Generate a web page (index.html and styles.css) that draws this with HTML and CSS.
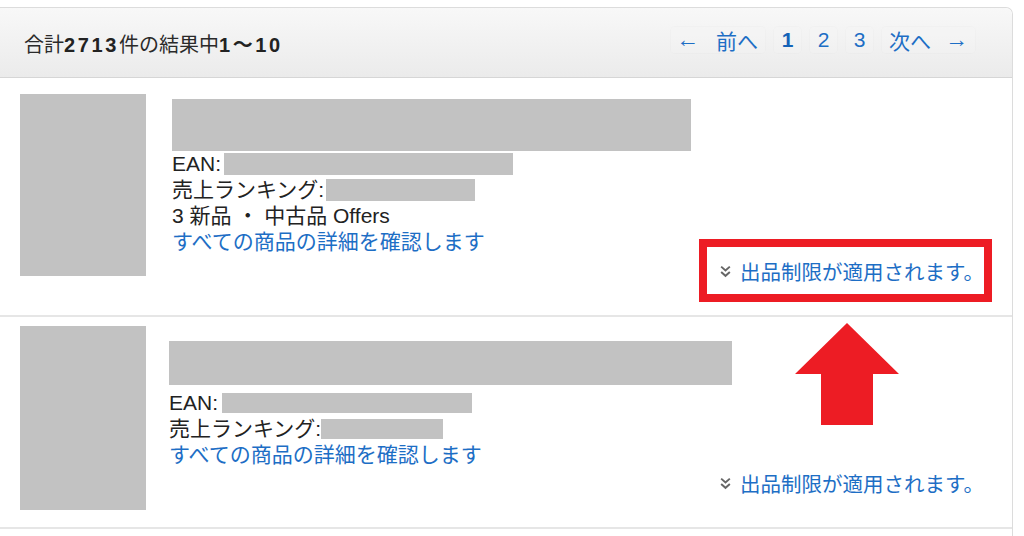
FILE: index.html
```html
<!DOCTYPE html>
<html lang="ja">
<head>
<meta charset="utf-8">
<title>検索結果</title>
<link rel="stylesheet" href="styles.css">
</head>
<body>
<div class="card">
  <div class="card-head">
    <div class="summary">合計<b>2713</b>件の結果中<b>1～10</b></div>
    <nav class="pager">
      <a class="pg pg-prev"><span class="arr">←</span><span>前へ</span></a>
      <a class="pg pg-num pg-cur">1</a>
      <a class="pg pg-num">2</a>
      <a class="pg pg-num">3</a>
      <a class="pg pg-next"><span>次へ</span><span class="arr">→</span></a>
    </nav>
  </div>

  <div class="row row-a">
    <div class="thumb"></div>
    <div class="info">
      <div class="title-block"></div>
      <div class="line">EAN:<span class="redact redact-ean"></span></div>
      <div class="line">売上ランキング:<span class="redact redact-rank"></span></div>
      <div class="line">3 新品 ・ 中古品 Offers</div>
      <a class="line link">すべての商品の詳細を確認します</a>
    </div>
    <div class="restrict">
      <svg class="chev" viewBox="0 0 12 12" width="13" height="13"><polyline points="2,1.5 6,5 10,1.5" fill="none" stroke="#666" stroke-width="1.8"/><polyline points="2,6.5 6,10 10,6.5" fill="none" stroke="#666" stroke-width="1.8"/></svg>
      <span>出品制限が適用されます。</span>
      <span class="mark-box"></span>
    </div>
  </div>

  <div class="row row-b">
    <div class="thumb"></div>
    <div class="info">
      <div class="title-block"></div>
      <div class="line">EAN:<span class="redact redact-ean"></span></div>
      <div class="line">売上ランキング:<span class="redact redact-rank"></span></div>
      <a class="line link">すべての商品の詳細を確認します</a>
    </div>
    <div class="restrict">
      <svg class="chev" viewBox="0 0 12 12" width="13" height="13"><polyline points="2,1.5 6,5 10,1.5" fill="none" stroke="#666" stroke-width="1.8"/><polyline points="2,6.5 6,10 10,6.5" fill="none" stroke="#666" stroke-width="1.8"/></svg>
      <span>出品制限が適用されます。</span>
    </div>
  </div>

  <div class="row row-c"></div>

  <svg class="mark-arrow" viewBox="0 0 104 102" width="104" height="102"><polygon points="52,0 104,51 78,51 78,102 26,102 26,51 0,51" fill="#ed1c24"/></svg>
</div>
</body>
</html>
```

FILE: styles.css
```css
* { box-sizing: border-box; }

html, body {
  margin: 0;
  padding: 0;
  background: #fff;
  overflow: hidden;
}

body {
  font-family: "Liberation Sans", "Noto Sans CJK JP", sans-serif;
  color: #222;
}

.card {
  position: relative;
  margin-top: 7px;
  width: 1013px;
  border: 1px solid #dcdcdc;
  border-left: none;
  border-radius: 0 7px 0 0;
  background: #fff;
}

.card-head {
  height: 70px;
  display: flex;
  align-items: center;
  justify-content: space-between;
  padding: 0 36px 0 24px;
  background: linear-gradient(#f8f8f8, #ebebeb);
  border-bottom: 1px solid #d6d6d6;
  border-radius: 0 7px 0 0;
}

.summary {
  font-size: 20px;
  color: #2a2a2a;
  margin-top: 2px;
  white-space: nowrap;
}

.summary b {
  font-weight: 700;
  color: #222;
  letter-spacing: 2.6px;
}

.pager {
  display: flex;
  gap: 7px;
  margin-top: -6px;
  margin-right: 0;
}

.pg {
  display: flex;
  align-items: center;
  height: 28px;
  padding: 0 7px;
  font-size: 21px;
  color: #1d6ec5;
  border: 1px solid rgba(0, 0, 0, 0.015);
  border-radius: 5px;
  background: rgba(255, 255, 255, 0.08);
}

.pg .arr { font-size: 23px; }
.pg-prev { padding-left: 5px; }
.pg-prev .arr { margin-right: 17px; }
.pg-next .arr { margin-left: 14px; }

.pg-num {
  width: 29px;
  justify-content: center;
  padding: 0;
}

.pg-cur {
  font-weight: 700;
  color: #1563b8;
}

.row {
  display: flex;
  align-items: flex-start;
  padding: 0 28px 0 20px;
  border-bottom: 2px solid #e6e6e6;
}

.row-a { height: 239px; }
.row-b { height: 212px; }
.row-c { height: 40px; border-bottom: none; }

.thumb {
  flex: none;
  width: 126px;
  background: #c2c2c2;
}

.row-a .thumb { margin-top: 16px; height: 182px; }
.row-b .thumb { margin-top: 9px; height: 184px; }

.info {
  flex: 1;
  min-width: 0;
  font-size: 21px;
  line-height: 26px;
  color: #222;
}

.row-a .info { margin-top: 21px; margin-left: 26px; }
.row-b .info { margin-top: 24px; margin-left: 23px; }

.title-block { background: #c2c2c2; }
.row-a .title-block { width: 519px; height: 52px; }
.row-b .title-block { width: 563px; height: 44px; margin-bottom: 5px; }

.line {
  display: flex;
  align-items: center;
  height: 26px;
  white-space: nowrap;
}

.redact {
  display: inline-block;
  background: #c2c2c2;
}

.row-a .redact-ean { width: 289px; height: 22px; margin-left: 3px; }
.row-a .redact-rank { width: 149px; height: 22px; margin-left: 2px; }
.row-b .redact-ean { width: 250px; height: 20px; margin-left: 4px; }
.row-b .redact-rank { width: 122px; height: 20px; margin-left: 0; }

.link {
  color: #1d6ec5;
  text-decoration: none;
}

.restrict {
  position: relative;
  flex: none;
  align-self: flex-end;
  display: flex;
  align-items: center;
  gap: 8px;
  height: 26px;
  margin-bottom: 31px;
  font-size: 20.5px;
  color: #1d6ec5;
  white-space: nowrap;
}

.chev { flex: none; margin-top: 1px; }

.mark-box {
  position: absolute;
  left: -20px;
  right: -8px;
  top: -19px;
  bottom: -18px;
  border: 8px solid #ed1c24;
}

.mark-arrow {
  position: absolute;
  left: 795px;
  top: 315px;
}
```
